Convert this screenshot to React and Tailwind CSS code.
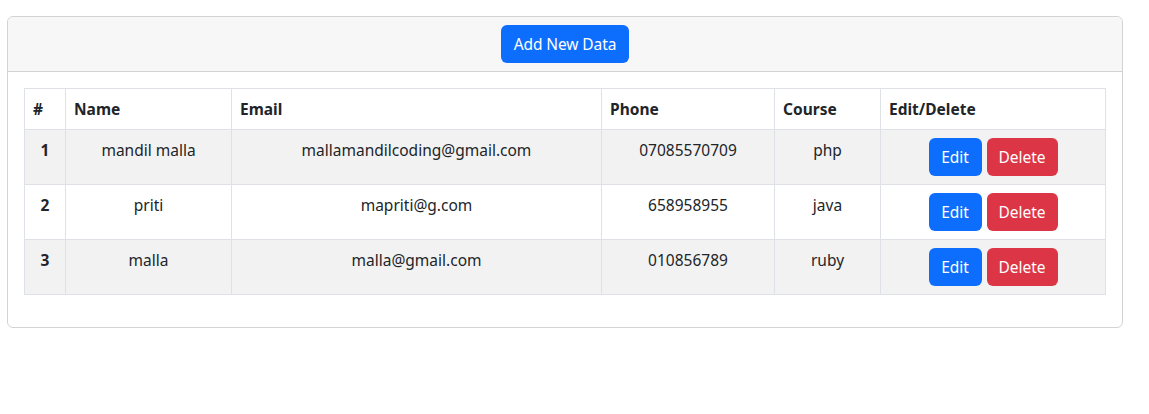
import React from 'react';

const students = [
  { id: 1, name: 'mandil malla', email: 'mallamandilcoding@gmail.com', phone: '07085570709', course: 'php' },
  { id: 2, name: 'priti', email: 'mapriti@g.com', phone: '658958955', course: 'java' },
  { id: 3, name: 'malla', email: 'malla@gmail.com', phone: '010856789', course: 'ruby' },
];

const App = () => {
  return (
    <div className="min-h-screen bg-white text-[#212529] text-base leading-6" style={{ fontFamily: '"Noto Sans", "Liberation Sans", sans-serif' }}>
      <div className="ml-[7px] mt-4 w-[1116px] border border-[#d3d3d3] rounded-md">
        {/* card header */}
        <div className="flex justify-center py-2 px-4 bg-[#f7f7f7] border-b border-[#d3d3d3] rounded-t-md">
          <button className="h-[38px] w-[128px] rounded-md bg-[#0d6efd] text-white text-[15.5px] tracking-[-0.1px]">Add New Data</button>
        </div>
        {/* card body */}
        <div className="p-4">
          <table className="w-[1081px] table-fixed border-collapse mb-4 text-[15.5px]">
            <colgroup>
              <col className="w-[41px]" />
              <col className="w-[166px]" />
              <col className="w-[370px]" />
              <col className="w-[173px]" />
              <col className="w-[106px]" />
              <col className="w-[225px]" />
            </colgroup>
            <thead>
              <tr className="h-[41px]">
                {['#', 'Name', 'Email', 'Phone', 'Course', 'Edit/Delete'].map((h) => (
                  <th key={h} className="border border-[#dee2e6] px-2 py-2 text-left font-bold">
                    {h}
                  </th>
                ))}
              </tr>
            </thead>
            <tbody>
              {students.map((s, i) => (
                <tr key={s.id} className={i % 2 === 0 ? 'bg-[#f2f2f2]' : 'bg-white'}>
                  <th className="border border-[#dee2e6] px-2 py-2 align-top font-bold text-center">{s.id}</th>
                  <td className="border border-[#dee2e6] px-2 py-2 align-top text-center">{s.name}</td>
                  <td className="border border-[#dee2e6] px-2 py-2 align-top text-center">{s.email}</td>
                  <td className="border border-[#dee2e6] px-2 py-2 align-top text-center">{s.phone}</td>
                  <td className="border border-[#dee2e6] px-2 py-2 align-top text-center">{s.course}</td>
                  <td className="border border-[#dee2e6] px-2 py-2 align-top">
                    <div className="flex justify-center gap-[5px]">
                      <button className="h-[38px] w-[53px] rounded-md bg-[#0d6efd] text-white">Edit</button>
                      <button className="h-[38px] w-[71px] rounded-md bg-[#dc3545] text-white">Delete</button>
                    </div>
                  </td>
                </tr>
              ))}
            </tbody>
          </table>
        </div>
      </div>
    </div>
  );
};

export default App;
